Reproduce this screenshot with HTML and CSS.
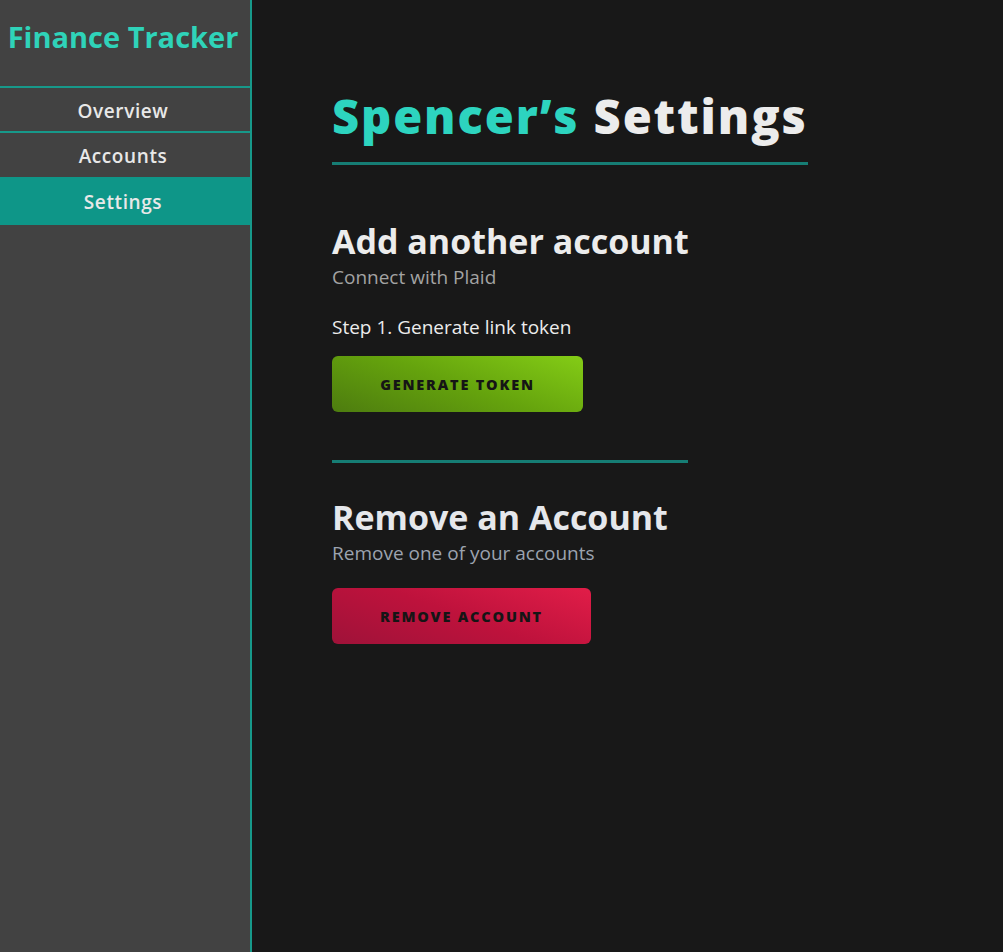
FILE: index.html
```html
<!DOCTYPE html>
<html>
<head>
<meta charset="utf-8">
<link rel="stylesheet" href="styles.css">
</head>
<body>
<div class="app">
  <aside class="sidebar">
    <div class="brand">Finance Tracker</div>
    <nav class="nav">
      <a class="nav-item">Overview</a>
      <a class="nav-item">Accounts</a>
      <a class="nav-item active">Settings</a>
    </nav>
  </aside>
  <main class="main">
    <h1 class="page-title"><span class="accent">Spencer’s</span> Settings</h1>
    <section class="section">
      <h2 class="section-title">Add another account</h2>
      <p class="section-sub">Connect with Plaid</p>
      <p class="step">Step 1. Generate link token</p>
      <button class="btn btn-green">GENERATE TOKEN</button>
    </section>
    <hr class="divider">
    <section class="section">
      <h2 class="section-title remove">Remove an Account</h2>
      <p class="section-sub blue">Remove one of your accounts</p>
      <button class="btn btn-red">REMOVE ACCOUNT</button>
    </section>
  </main>
</div>
</body>
</html>
```

FILE: styles.css
```css
* { box-sizing: border-box; }
html, body { margin: 0; padding: 0; height: 100%; }
body {
  background: #181818;
  font-family: "Open Sans", "Noto Sans", sans-serif;
  color: #e6e6e6;
}
.app {
  display: flex;
  min-height: 952px;
}
.sidebar {
  width: 252px;
  flex: none;
  background: #424242;
  border-right: 2px solid #17998a;
}
.brand {
  height: 88px;
  display: flex;
  align-items: center;
  justify-content: center;
  padding: 0 4px 14px 0;
  color: #2fd3b9;
  font-size: 29px;
  font-weight: 700;
  border-bottom: 2px solid #17998a;
}
.nav { display: flex; flex-direction: column; }
.nav-item {
  display: flex;
  align-items: center;
  justify-content: center;
  height: 44px;
  font-size: 19px;
  font-weight: 600;
  color: #e8e8e8;
  letter-spacing: 0.6px;
  padding: 2px 4px 0 0;
}
.nav-item:first-child { height: 45px; border-bottom: 2px solid #17998a; }
.nav-item.active {
  background: #0e9688;
  height: 48px;
}
.main {
  flex: 1;
  padding: 80px 0 0 80px;
}
.page-title {
  display: inline-block;
  margin: 0;
  font-size: 47px;
  font-weight: 800;
  letter-spacing: 1.9px;
  color: #ececec;
  padding-bottom: 10px;
  border-bottom: 3px solid #167d74;
  line-height: 72px;
}
.accent { color: #2dd4bf; }
.section { margin-top: 56px; }
.section-title {
  margin: 0;
  font-size: 34px;
  font-weight: 700;
  line-height: 40px;
  color: #ececec;
}
.section-title.remove { color: #e5e7eb; }
.section-sub {
  margin: 4px 0 0;
  font-size: 19px;
  line-height: 24px;
  color: #a3a3a3;
}
.section-sub.blue { color: #9ca3af; }
.step {
  margin: 25px 0 0;
  font-size: 19px;
  line-height: 26px;
  color: #ececec;
}
.btn {
  display: block;
  border: none;
  border-radius: 6px;
  height: 56px;
  font-family: inherit;
  font-size: 14.5px;
  font-weight: 800;
  letter-spacing: 1.8px;
  color: #151515;
  margin-top: 16px;
}
.btn-green {
  width: 251px;
  background: linear-gradient(20deg, #4d7c0f 0%, #65a30d 50%, #84cc16 100%);
}
.btn-red {
  width: 259px;
  margin-top: 23px;
  background: linear-gradient(20deg, #9f1239 0%, #be123c 50%, #e11d48 100%);
}
.divider {
  width: 356px;
  margin: 48px 0 0;
  border: none;
  height: 3px;
  background: #167d74;
}
.divider + .section { margin-top: 34px; }
```
